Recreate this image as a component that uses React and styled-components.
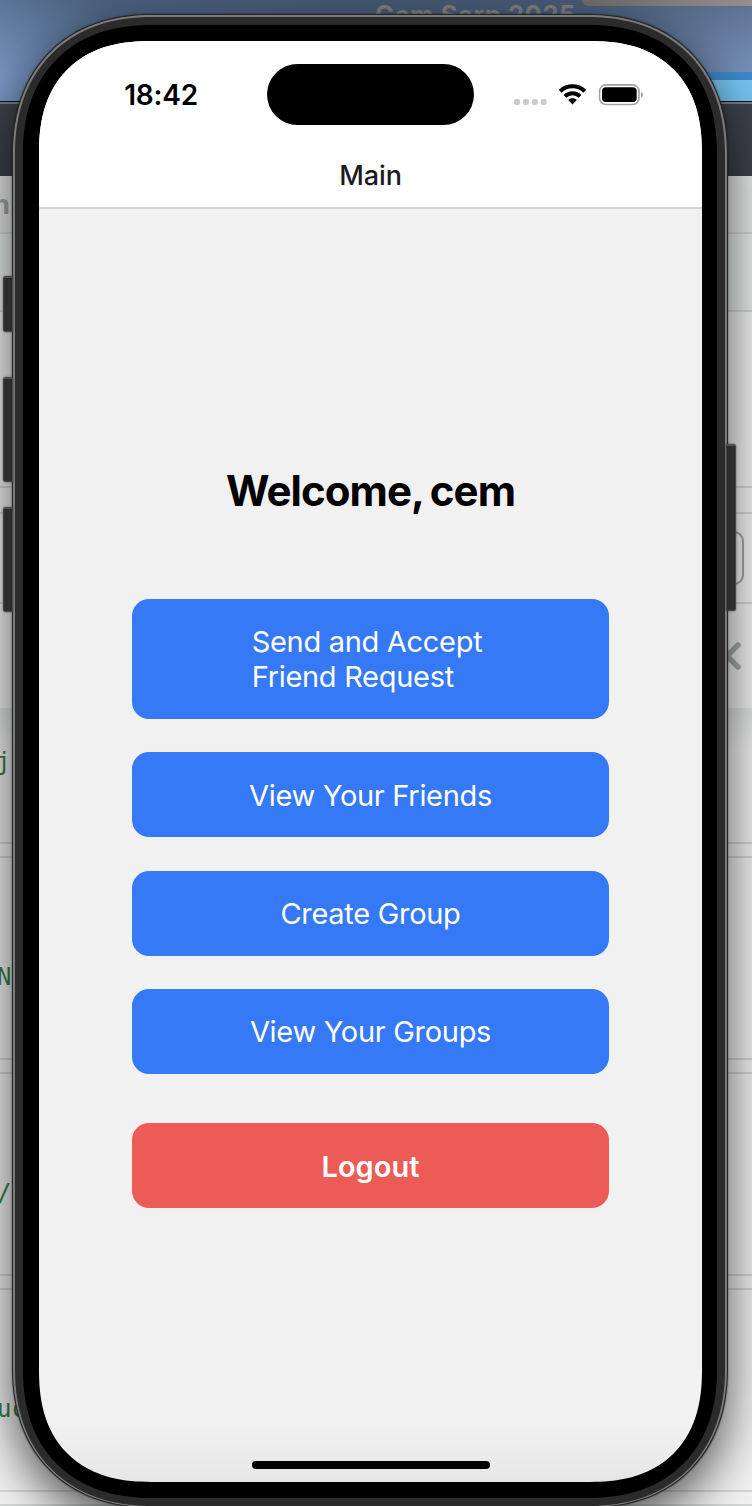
import React from "react";
import styled, { createGlobalStyle, css } from "styled-components";

const GlobalStyle = createGlobalStyle`
  *, *::before, *::after { box-sizing: border-box; }
  body { margin: 0; overflow: hidden; }
`;

/* Continuous corner where the browser can draw it, plain arc otherwise */
const corner = (arc, smooth, curve) => css`
  border-radius: ${arc}px;
  @supports (corner-shape: superellipse(1.2)) {
    border-radius: ${smooth}px;
    corner-shape: superellipse(${curve});
  }
`;

const Desktop = styled.div`
  display: grid;
  width: 752px;
  height: 1506px;
  overflow: hidden;
  font-family: Inter, "Liberation Sans", sans-serif;
  > * { grid-area: 1 / 1; }
`;

/* Desktop and editor window behind the simulator */
const Backdrop = styled.div`
  display: flex;
  flex-direction: column;
  background: #edeeee;
`;

const Wallpaper = styled.div`
  position: relative;
  height: 101px;
  flex: none;
  background:
    linear-gradient(180deg, rgba(50, 62, 80, 0.4), rgba(50, 62, 80, 0) 75%),
    linear-gradient(90deg, #7896c2 0, #5c789e 14%, #52698a 50%, #566f94 78%, #7a92bb 100%);
`;

const SimulatorTitle = styled.div`
  position: absolute;
  left: 375px;
  top: 0;
  font-size: 25.5px;
  line-height: 30px;
  font-weight: 700;
  color: #827f7e;
  white-space: nowrap;
  letter-spacing: 0.6px;
`;

const TopPanel = styled.div`
  position: absolute;
  left: 582px;
  right: 0;
  top: 0;
  height: 6px;
  background: linear-gradient(90deg, #706d6b, #918e8c);
  border-bottom-left-radius: 6px;
`;

const BlueStrip = styled.div`
  position: absolute;
  left: 680px;
  right: 0;
  bottom: 0;
  height: 29px;
  background: #74c3f0;
  border-top: 8px solid #3b89cb;
`;

const TabStrip = styled.div`
  flex: none;
  height: 75px;
  border-top: 1px solid #101217;
  background: #3e404c;
  box-shadow: inset 0 2px 0 #7b7d80;
`;

const Band = styled.div`
  flex: none;
  display: flex;
  align-items: center;
  justify-content: ${(p) => (p.$end ? "flex-end" : "flex-start")};
  height: ${(p) => p.$h}px;
  background: ${(p) => p.$bg || "#f1f1f1"};
  border-bottom: ${(p) => (p.$line === false ? "0" : "2px solid #d4d6d6")};
`;

const ToolbarText = styled.span`
  margin-left: -7px;
  font-size: 27px;
  font-weight: 700;
  color: #a3a5a5;
`;

const Code = styled.span`
  margin-left: ${(p) => p.$x}px;
  padding-top: ${(p) => p.$drop || 0}px;
  padding-bottom: ${(p) => p.$lift || 0}px;
  font-family: "DejaVu Sans Mono", monospace;
  font-size: 24px;
  line-height: 28px;
  color: #35804f;
`;

const FieldEnd = styled.span`
  width: 60px;
  height: 54px;
  margin-right: 8px;
  border: 2px solid #9ba3a1;
  border-radius: 10px;
`;

const Chevron = styled.svg`
  width: 18px;
  height: 30px;
  margin-right: 11px;
`;

/* Device */
const Phone = styled.div`
  position: relative;
  align-self: start;
  width: 716px;
  height: 1494px;
  margin: 14px 0 0 12px;
  border: 1px solid #252525;
  ${corner(128, 140, 1.15)}
  background: #7b7b7b;
  padding: 2px;
  box-shadow: 0 18px 50px rgba(0, 0, 0, 0.66), 0 0 2px rgba(0, 0, 0, 0.5);
`;

const Frame = styled.div`
  position: relative;
  height: 1489px;
  padding: 8px;
  ${corner(125, 137, 1.15)}
  background: #2b2b2b;
`;

const Bezel = styled.div`
  height: 1473px;
  padding: 16px 15px 16px 16px;
  ${corner(116, 128, 1.17)}
  background: #000;
`;

const SideButton = styled.span`
  position: absolute;
  ${(p) => (p.$right ? "right: -9px" : "left: -10px")};
  top: ${(p) => p.$top}px;
  width: 10px;
  height: ${(p) => p.$h}px;
  border: 1px solid #454545;
  border-top: 2px solid #4e4e4e;
  border-radius: ${(p) => (p.$right ? "0 3px 3px 0" : "3px 0 0 3px")};
  background: #2c2c2c;
  box-shadow: 0 0 2px rgba(0, 0, 0, 0.6);
`;

const Screen = styled.main`
  display: flex;
  flex-direction: column;
  height: 1441px;
  ${corner(98, 112, 1.245)}
  overflow: hidden;
  background: linear-gradient(#f1f1f1 1384px, #e6e6e6 1441px);
`;

const Header = styled.header`
  height: 168px;
  flex: none;
  padding-top: 23px;
  background: #fff;
  border-bottom: 2px solid #d2d2d3;
`;

const StatusBar = styled.div`
  display: grid;
  grid-template-columns: 1fr 207px 1fr;
  align-items: center;
  height: 61px;
`;

const Time = styled.span`
  justify-self: end;
  margin-right: 69px;
  font-size: 28px;
  line-height: 34px;
  font-weight: 600;
  letter-spacing: -0.2px;
`;

const Island = styled.span`
  height: 61px;
  border-radius: 31px;
  background: #000;
`;

const StatusIcons = styled.svg`
  width: 132px;
  height: 24px;
  margin-left: 40px;
`;

const ScreenTitle = styled.h1`
  margin: 34px 0 0;
  font-size: 27px;
  line-height: 34px;
  font-weight: 500;
  text-align: center;
  color: #1c1c1e;
  letter-spacing: -0.1px;
`;

const Content = styled.section`
  flex: 1;
  display: flex;
  flex-direction: column;
  align-items: center;
  padding-top: 256px;
`;

const Welcome = styled.h2`
  margin: 0 0 83px;
  font-size: 42px;
  line-height: 51px;
  font-weight: 700;
  letter-spacing: -0.95px;
  word-spacing: -2px;
  color: #000;
  white-space: nowrap;
`;

const Actions = styled.div`
  display: flex;
  flex-direction: column;
  gap: 33.3px;
  width: 477.5px;
`;

const Button = styled.button`
  display: flex;
  align-items: center;
  justify-content: center;
  height: ${(p) => (p.$tall ? 120 : 85)}px;
  margin: ${(p) => (p.$danger ? "16px 0 0" : "0")};
  padding: ${(p) => (p.$tall ? "0 7px 0 0" : "1px 0 0")};
  border: 0;
  border-radius: 17px;
  background: ${(p) => (p.$danger ? "#ec5b56" : "#3579f6")};
  color: #fff;
  font-family: inherit;
  font-size: 29px;
  line-height: 35px;
  font-weight: ${(p) => (p.$danger ? 600 : 400)};
  letter-spacing: ${(p) => (p.$danger ? 0 : -0.3)}px;
  text-align: left;
  white-space: pre-line;
`;

const HomeIndicator = styled.div`
  align-self: center;
  width: 238px;
  height: 8px;
  margin-bottom: 13px;
  border-radius: 4px;
  background: #000;
`;

const App = () => (
  <>
    <GlobalStyle />
    <Desktop>
      <Backdrop>
        <Wallpaper>
          <SimulatorTitle>Cem Sarp 2025</SimulatorTitle>
          <TopPanel />
          <BlueStrip />
        </Wallpaper>
        <TabStrip />
        <Band $h={58} $bg="#e6e7e7"><ToolbarText>n</ToolbarText></Band>
        <Band $h={78} $bg="#e9ecec" />
        <Band $h={176} />
        <Band $h={26} />
        <Band $h={90} $end><FieldEnd /></Band>
        <Band $h={104} $end $line={false}>
          <Chevron viewBox="0 0 18 30">
            <path d="M15 4 4 15l11 11" fill="none" stroke="#a5adaa" strokeWidth="5.5" strokeLinecap="round" />
          </Chevron>
        </Band>
        <Band $h={136} $bg="linear-gradient(#dfe3e2, #f0f0f0 40px)"><Code $x={-4} $lift={26}>j</Code></Band>
        <Band $h={14} />
        <Band $h={202}><Code $x={-3} $drop={37}>N</Code></Band>
        <Band $h={14} />
        <Band $h={202}><Code $x={-3} $drop={38}>/</Code></Band>
        <Band $h={14} />
        <Band $h={202}><Code $x={-3} $drop={37}>uc</Code></Band>
        <Band $h={14} />
      </Backdrop>

      <Phone>
        <SideButton $top={261} $h={56} />
        <SideButton $top={362} $h={105} />
        <SideButton $top={492} $h={105} />
        <SideButton $right $top={429} $h={167} />
        <Frame>
          <Bezel>
            <Screen>
              <Header>
                <StatusBar>
                  <Time>18:42</Time>
                  <Island />
                  <StatusIcons viewBox="0 0 132 24">
                    <g fill="#cbcbcb">
                      <rect x="0" y="16" width="6" height="6" rx="2" />
                      <rect x="9" y="16" width="6" height="6" rx="2" />
                      <rect x="17.8" y="16" width="6" height="6" rx="2" />
                      <rect x="26.7" y="16" width="6" height="6" rx="2" />
                    </g>
                    <g fill="none" stroke="#000" strokeWidth="4">
                      <path d="M46.2 8.2C53.2 1.7 63.8 1.7 70.8 8.2" />
                      <path d="M50.9 13.4C55.2 9.3 61.8 9.3 66.1 13.4" />
                    </g>
                    <path d="M54.2 17.1C56.6 14.7 60.4 14.7 62.8 17.1L58.5 21.6Z" />
                    <rect x="85.6" y="1.9" width="39.4" height="19.6" rx="6.3" fill="none" stroke="#a2a2a2" strokeWidth="1.6" />
                    <rect x="88" y="4.3" width="34.7" height="14.8" rx="4" />
                    <path d="M127 9c2.6.8 2.6 4.8 0 5.7z" fill="#a2a2a2" />
                  </StatusIcons>
                </StatusBar>
                <ScreenTitle>Main</ScreenTitle>
              </Header>
              <Content>
                <Welcome>Welcome, cem</Welcome>
                <Actions>
                  <Button $tall>{"Send and Accept\nFriend Request"}</Button>
                  <Button>View Your Friends</Button>
                  <Button>Create Group</Button>
                  <Button>View Your Groups</Button>
                  <Button $danger>Logout</Button>
                </Actions>
              </Content>
              <HomeIndicator />
            </Screen>
          </Bezel>
        </Frame>
      </Phone>
    </Desktop>
  </>
);

export default App;
